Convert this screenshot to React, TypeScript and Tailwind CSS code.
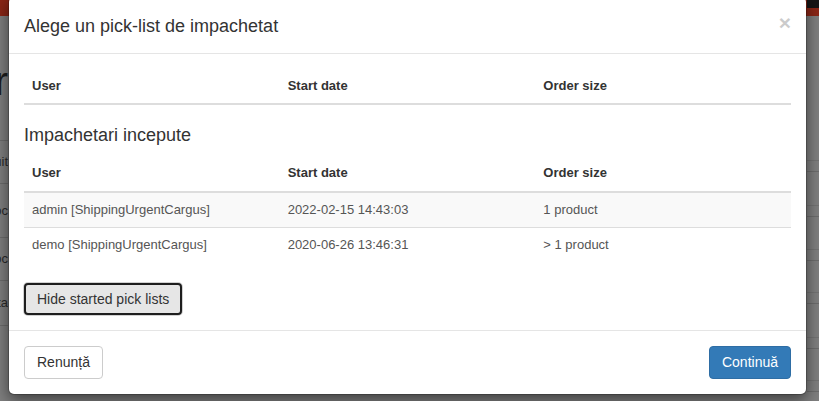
import React from "react";

const leftRows = [
  { h: 43, t: "Distribuit" },
  { h: 54, t: "Colectat pe loc" },
  { h: 43, t: "Nou bloc" },
  { h: 45, t: "Anulata" },
  { h: 43, t: "" },
];

const rightRows = [
  { h: 44 },
  { h: 45 },
  { h: 44 },
  { h: 43 },
  { h: 45 },
  { h: 43 },
];

function Th({ children }: { children: React.ReactNode }) {
  return (
    <th className="w-1/3 border-b-2 border-[#ddd] p-[8px] text-left align-bottom font-bold text-[#333]">
      {children}
    </th>
  );
}

function Td({ children }: { children: React.ReactNode }) {
  return <td className="border-t border-[#ddd] p-[8px] align-top text-[#555]">{children}</td>;
}

export default function App() {
  return (
    <div className="relative h-[401px] w-[819px] overflow-hidden bg-[#7f7f7f] font-['Liberation_Sans',Arial,sans-serif] text-[#333]">
      {/* page behind the (already dimmed) backdrop */}
      <div className="flex h-[16px]">
        <div className="flex-1 bg-[#8a2616]" />
        <div className="flex w-[12px] flex-col">
          <div className="h-[8px] bg-[#151515]" />
          <div className="h-[8px] bg-[#8a2616]" />
        </div>
      </div>
      <div className="flex">
        <div className="w-[8px] overflow-hidden">
          <div className="flex h-[124px] items-center justify-end pt-[6px]">
            <span className="whitespace-nowrap text-[40px] leading-none text-[#1c1c1c]">Comenzi de procesar</span>
          </div>
          {leftRows.map((r, i) => (
            <div
              key={i}
              className="flex items-center justify-end border-t border-[#6c6c6c] text-[13px] text-[#2a2a2a]"
              style={{ height: r.h }}
            >
              <span className="whitespace-nowrap">{r.t}</span>
            </div>
          ))}
        </div>
        <div className="flex-1" />
        <div className="w-[12px] pt-[112px]">
          {rightRows.map((r, i) => (
            <div key={i} className="flex flex-col justify-end border-b border-[#6c6c6c]" style={{ height: r.h }}>
              <div className="mb-[10px] border-b border-[#737373]" />
            </div>
          ))}
        </div>
      </div>

      {/* modal */}
      <div className="absolute left-[8px] top-[-4px] w-[799px] rounded-[6px] border border-black/20 bg-white bg-clip-padding shadow-[0_5px_15px_rgba(0,0,0,0.5)]">
        <div className="flex items-start justify-between border-b border-[#e5e5e5] px-[15px] pb-[13px] pt-[16px]">
          <h4 className="m-0 mt-[1px] text-[18px] leading-[1.42857] font-normal text-[#333]">Alege un pick-list de impachetat</h4>
          <button className="mt-[-1px] text-[21px] font-bold leading-none text-black opacity-20">×</button>
        </div>

        <div className="p-[15px] text-[13px] leading-[1.42857]">
          <table className="mb-[20px] w-full table-fixed border-collapse">
            <thead>
              <tr>
                <Th>User</Th>
                <Th>Start date</Th>
                <Th>Order size</Th>
              </tr>
            </thead>
          </table>

          <h4 className="mb-[10px] pt-[1px] text-[18px] leading-[1.1] font-normal text-[#333]">Impachetari incepute</h4>

          <table className="mb-[20px] w-full table-fixed border-collapse">
            <thead>
              <tr>
                <Th>User</Th>
                <Th>Start date</Th>
                <Th>Order size</Th>
              </tr>
            </thead>
            <tbody>
              <tr className="bg-[#f9f9f9]">
                <Td>admin [ShippingUrgentCargus]</Td>
                <Td>2022-02-15 14:43:03</Td>
                <Td>1 product</Td>
              </tr>
              <tr>
                <Td>demo [ShippingUrgentCargus]</Td>
                <Td>2020-06-26 13:46:31</Td>
                <Td>&gt; 1 product</Td>
              </tr>
            </tbody>
          </table>

          <button className="rounded-[4px] border-2 border-[#1e1e1e] bg-[#e6e6e6] px-[11px] py-[5px] text-[14px] leading-[18px] text-[#333] shadow-[0_0_0_1px_rgba(0,0,0,0.18)]">
            Hide started pick lists
          </button>
        </div>

        <div className="flex items-center justify-between border-t border-[#e5e5e5] p-[15px]">
          <button className="rounded-[4px] border border-[#ccc] bg-white px-[12px] py-[6px] text-[14px] leading-[19px] text-[#333]">
            Renunță
          </button>
          <button className="rounded-[4px] border border-[#2e6da4] bg-[#337ab7] px-[12px] py-[6px] text-[14px] leading-[19px] text-white">
            Continuă
          </button>
        </div>
      </div>
    </div>
  );
}
